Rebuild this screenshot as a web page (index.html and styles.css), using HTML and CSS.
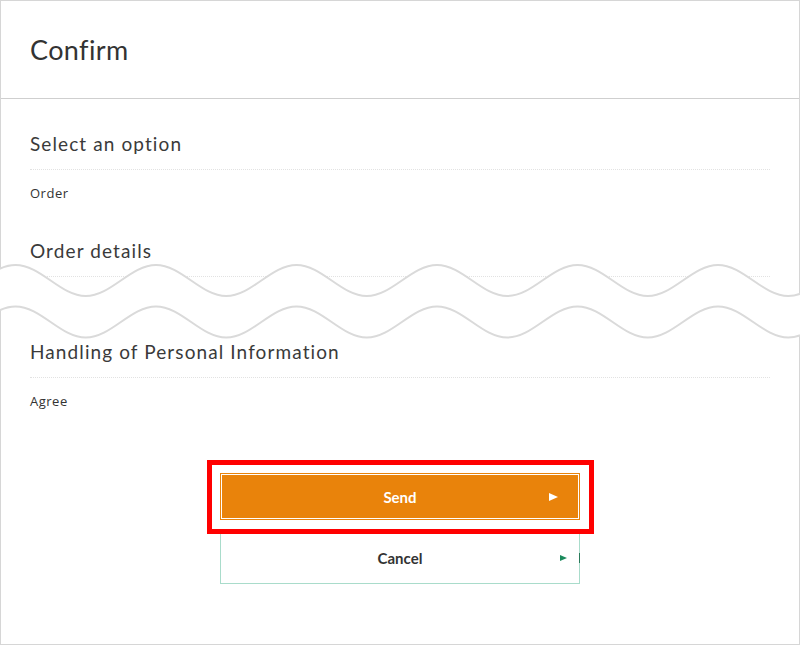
FILE: index.html
```html
<html>

<head>
	<title>Confirm</title>
	<link rel="stylesheet" href="styles.css">
</head>

<body>
	<div class="page">
		<div class="header">
			<h1>Confirm</h1>
		</div>

		<div class="content">
			<div class="section">
				<h2 class="section-title">Select an option</h2>
				<p class="section-value">Order</p>
			</div>

			<div class="section section-cut">
				<h2 class="section-title">Order details</h2>
			</div>

			<div class="section">
				<h2 class="section-title">Handling of Personal Information</h2>
				<p class="section-value">Agree</p>
			</div>

			<div class="actions">
				<button class="btn btn-send">Send<span class="arrow"></span></button>
				<button class="btn btn-cancel">Cancel<span class="arrow"></span></button>
			</div>
		</div>
	</div>

	<!-- cut mark: the part between the two waves is left out -->
	<svg class="wave" width="800" height="100" viewBox="0 250 800 100">
		<path d="M -125 265
			c 25.58 0 44.67 31 70.25 31 s 44.67 -31 70.25 -31
			s 44.67 31 70.25 31 s 44.67 -31 70.25 -31
			s 44.67 31 70.25 31 s 44.67 -31 70.25 -31
			s 44.67 31 70.25 31 s 44.67 -31 70.25 -31
			s 44.67 31 70.25 31 s 44.67 -31 70.25 -31
			s 44.67 31 70.25 31 s 44.67 -31 70.25 -31
			s 44.67 31 70.25 31 s 44.67 -31 70.25 -31
			L 858.5 306.5
			c -25.58 0 -44.67 31 -70.25 31 s -44.67 -31 -70.25 -31
			s -44.67 31 -70.25 31 s -44.67 -31 -70.25 -31
			s -44.67 31 -70.25 31 s -44.67 -31 -70.25 -31
			s -44.67 31 -70.25 31 s -44.67 -31 -70.25 -31
			s -44.67 31 -70.25 31 s -44.67 -31 -70.25 -31
			s -44.67 31 -70.25 31 s -44.67 -31 -70.25 -31
			s -44.67 31 -70.25 31 s -44.67 -31 -70.25 -31
			Z" fill="#fff" stroke="#dadada" stroke-width="2"/>
	</svg>

	<div class="highlight"></div>
</body>

</html>
```

FILE: styles.css
```css
		body {
            font-family: Lato, "Open Sans", sans-serif;
            color: #333;
            background-color: #fff;
            margin: 0;
            padding: 0;
            position: relative;
            width: 800px;
            height: 645px;
            overflow: hidden;
        }

        .page {
            box-sizing: border-box;
            width: 800px;
            height: 645px;
            border: 1px solid #d6d6d6;
        }

        .header {
            height: 97px;
            border-bottom: 1px solid #cfcfcf;
            padding: 0 29px;
            display: flex;
            align-items: center;
        }

        h1 {
            font-size: 27px;
            font-weight: 400;
            margin: 0;
            letter-spacing: 0.4px;
        }

        .content {
            padding: 0 29px;
        }

        .section {
            margin-top: 36px;
        }

        .section:first-child {
            margin-top: 33px;
        }

        .section-cut {
            height: 65px;
        }

        .section-title {
            font-size: 19px;
            font-weight: 400;
            line-height: 24px;
            letter-spacing: 1.1px;
            color: #3a3a3a;
            margin: 0;
            padding-bottom: 13px;
            border-bottom: 1px dotted #e2e2e2;
        }

        .section-value {
            font-family: "Open Sans", sans-serif;
            font-size: 13px;
            line-height: 20px;
            letter-spacing: 0.5px;
            margin: 13px 0 0 0;
        }

        .actions {
            display: flex;
            flex-direction: column;
            align-items: center;
            gap: 12px;
            margin-top: 62px;
        }

        .btn {
            position: relative;
            width: 360px;
            font-family: Lato, sans-serif;
            font-size: 15px;
            font-weight: 700;
            cursor: pointer;
        }

        .btn-send {
            height: 47px;
            background-color: #e9830b;
            color: #fff;
            border: 1px solid #e9830b;
            box-shadow: inset 0 0 0 1px #fff;
        }

        .btn-cancel {
            height: 52px;
            background-color: #fff;
            color: #333;
            border: 1px solid #a9dccb;
        }

        .arrow {
            position: absolute;
            top: 50%;
            width: 0;
            height: 0;
            border-style: solid;
        }

        .btn-send .arrow {
            right: 21px;
            margin-top: -4px;
            border-width: 4px 0 4px 9px;
            border-color: transparent transparent transparent #fff;
        }

        .btn-cancel .arrow {
            right: 12px;
            margin-top: -3px;
            border-width: 3px 0 3px 7px;
            border-color: transparent transparent transparent #1b8a5c;
        }

        .btn-cancel::after {
            content: "";
            position: absolute;
            right: -1px;
            top: 20px;
            width: 1px;
            height: 10px;
            background-color: #2a7a5a;
        }

        .wave {
            position: absolute;
            top: 250px;
            left: 0;
        }

        .highlight {
            position: absolute;
            left: 207px;
            top: 460px;
            width: 377px;
            height: 64px;
            border: 5px solid #f00;
        }
```
